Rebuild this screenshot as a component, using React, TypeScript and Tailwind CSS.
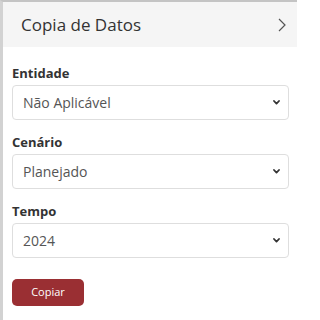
import React from "react";

function Chevron() {
  return (
    <svg width="7" height="5" viewBox="0 0 7 5" className="shrink-0">
      <path d="M1 1 L3.5 3.6 L6 1" fill="none" stroke="#333" strokeWidth="1.8" strokeLinecap="round" strokeLinejoin="round" />
    </svg>
  );
}

function Field({ label, value }: { label: string; value: string }) {
  return (
    <div className="flex flex-col">
      <div className="h-[18px] text-[13px] leading-[18px] font-bold text-[#333]">{label}</div>
      <div className="mt-[3px] h-[35px] rounded-[4px] border border-[#dedede] bg-white flex items-center justify-between pl-[10px] pr-[8px]">
        <span className="text-[14px] text-[#555]">{value}</span>
        <Chevron />
      </div>
    </div>
  );
}

export default function App() {
  return (
    <div
      className="w-[297px] h-[320px] bg-white border-l-[3px] border-t-2 border-l-[#d2d2d2] border-t-[#c4c4c4] flex flex-col"
      style={{ fontFamily: '"Open Sans", "Noto Sans", sans-serif' }}
    >
      <div className="h-[45px] bg-[#f5f5f5] flex items-center justify-between pl-[18px] pr-[11px]">
        <span className="text-[17px] text-[#333] leading-none">Copia de Datos</span>
        <svg width="8" height="14" viewBox="0 0 8 14">
          <path d="M1 1 L7 7 L1 13" fill="none" stroke="#555" strokeWidth="1.2" />
        </svg>
      </div>
      <div className="flex flex-col gap-[13px] pl-[9px] pr-[8px] pt-[17px]">
        <Field label="Entidade" value="Não Aplicável" />
        <Field label="Cenário" value="Planejado" />
        <Field label="Tempo" value="2024" />
        <div className="pt-[8px]">
          <button className="w-[72px] h-[27px] rounded-[5px] bg-[#9a2f33] text-white text-[11px] flex items-center justify-center">
            Copiar
          </button>
        </div>
      </div>
    </div>
  );
}
